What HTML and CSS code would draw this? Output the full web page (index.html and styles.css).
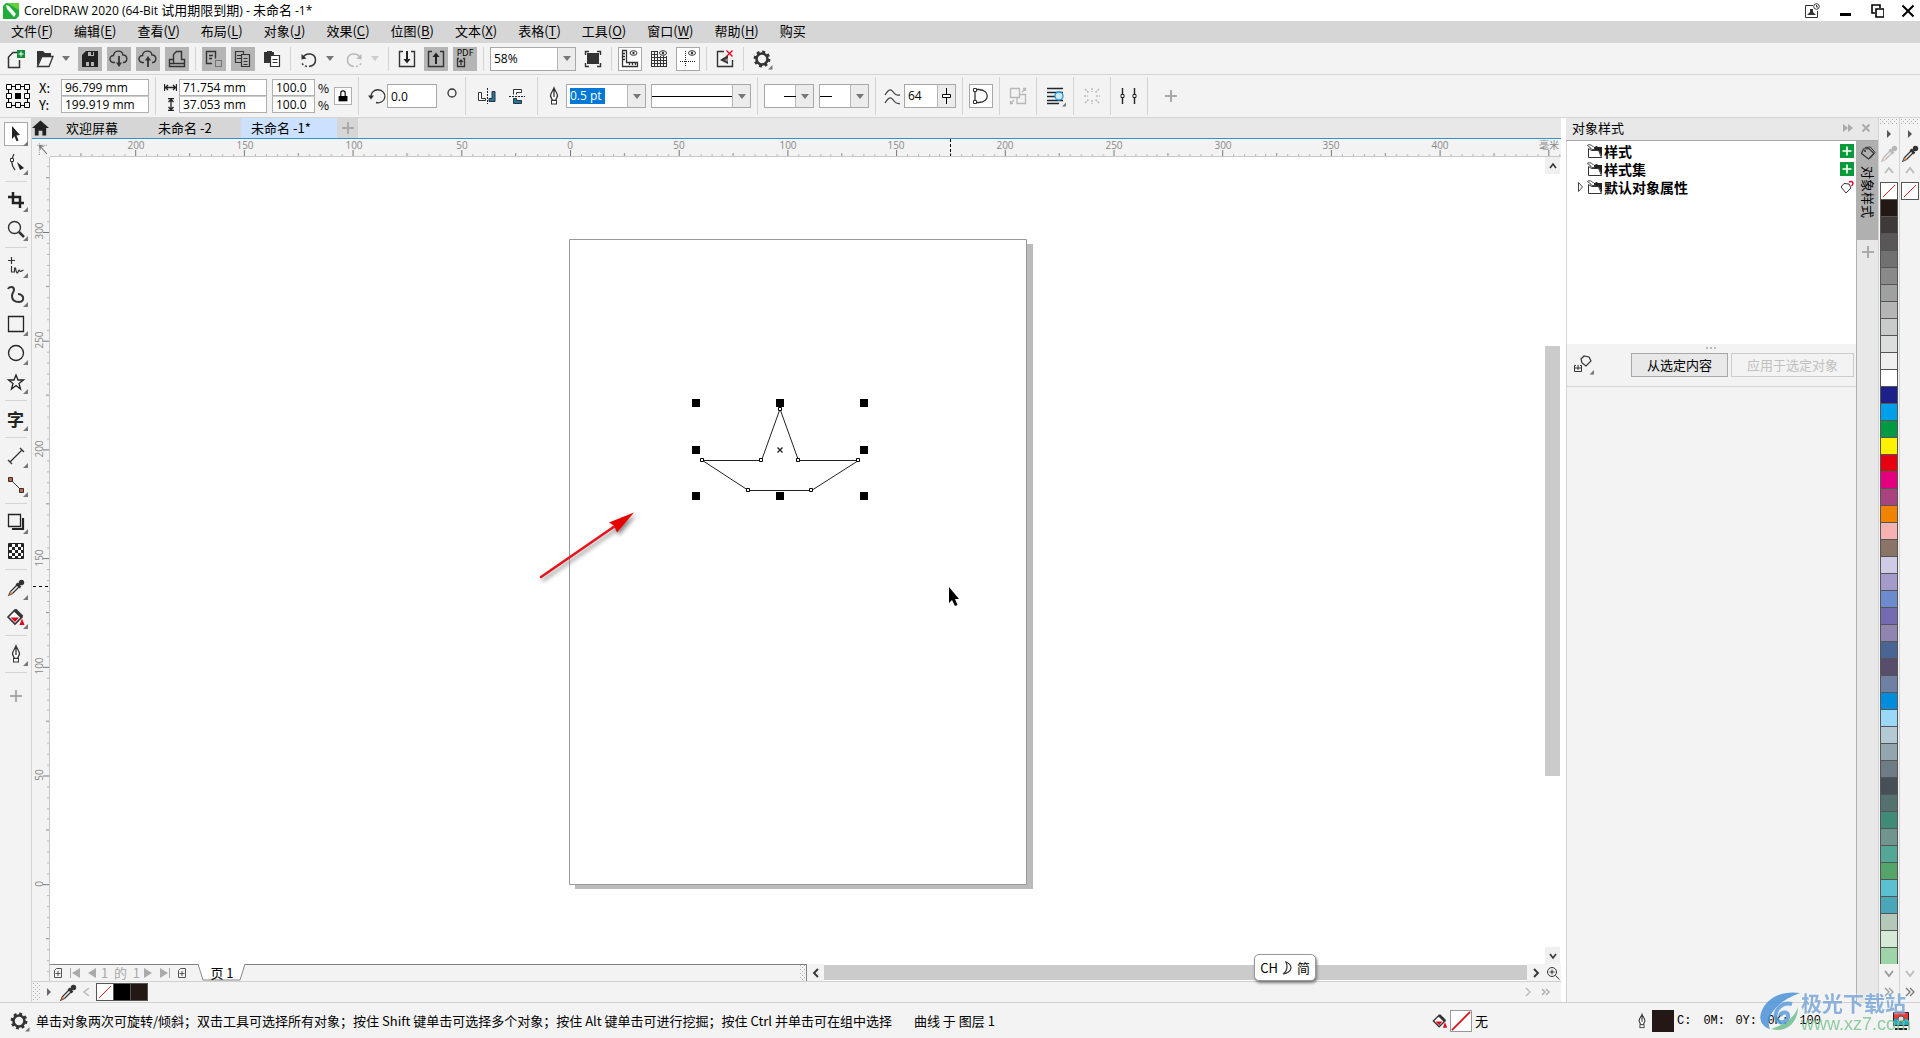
FILE: index.html
```html
<!DOCTYPE html>
<html lang="zh-CN">
<head>
<meta charset="utf-8">
<meta name="viewport" content="width=device-width, initial-scale=1">
<title>CorelDRAW 2020 - 未命名 -1</title>
<link rel="stylesheet" href="styles.css">
</head>
<body>
<svg class="defs" aria-hidden="true">
  <defs>
    <symbol id="caret" viewBox="0 0 8 5"><path d="M0 0h8L4 5z" fill="#777"/></symbol>
    <symbol id="gear" viewBox="0 0 24 24"><circle cx="12" cy="12" r="5.5" fill="none" stroke="#333" stroke-width="2.6"/><circle cx="12" cy="12" r="7.2" fill="none" stroke="#333" stroke-width="2.4" stroke-dasharray="2.9 2.755"/><path d="M22.5 18v4.500h-4.500z" fill="#777"/></symbol>
    <symbol id="dropper" viewBox="0 0 24 24"><path d="M5 19l1.500-3.500 7-7 2 2-7 7z" fill="#eee" stroke="#333" stroke-width="1.300"/><path d="M5 19l1.500-3.500 2.500 2z" fill="#e08040"/><path d="M12.500 7.500l4 4M14 9.500l4-4" stroke="#333" stroke-width="2.500"/><circle cx="17.500" cy="6.500" r="2.700" fill="#333"/></symbol>
    <symbol id="bucket" viewBox="0 0 24 24"><path d="M4 12l7-7 7 7-7 7z" fill="#fff" stroke="#333" stroke-width="1.600"/><path d="M11 5l7 7" stroke="#333" stroke-width="3.500"/><path d="M6.500 12.500h8.500L11 17z" fill="#e2001a"/><path d="M18 13.500l2.500 6.500h-5z" fill="#e2001a"/></symbol>
    <symbol id="pen" viewBox="0 0 24 24"><path d="M12 4c1 3 3.500 5 3.500 8l-2 4.500h-3L8.500 12c0-3 2.500-5 3.500-8zM12 5v8" fill="#fff" stroke="#333" stroke-width="1.300"/><rect x="9.500" y="16.500" width="5" height="3.500" fill="#fff" stroke="#333"/></symbol>
    <symbol id="folder" viewBox="0 0 18 16"><path d="M8 4l3-1 1 1h4v10l-3-6H8z" fill="#222"/><path d="M2.500 5.500v9h13l-3-7h-7l-3-2" fill="#fff" stroke="#333"/><path d="M7.500 4C5 1 1.500 1.500 1.500 2.500s2 .5 3 2.500 2 1.500 4 1.500" fill="#fff" stroke="#333"/></symbol>
    <symbol id="tag" viewBox="0 0 16 16"><path d="M1.500 8.500l2-4.500L9 3.500l5 5-5.500 5.500z" fill="none" stroke="#333" stroke-width="1.200"/><circle cx="5" cy="6" r="1" fill="#333"/></symbol>
    <symbol id="pageadd" viewBox="0 0 10 12"><path d="M3.500 1.500h5v9h-7v-7z" fill="none" stroke="#555"/><path d="M5 4v5M2.500 6.500h5" stroke="#555"/></symbol>
    <symbol id="plus" viewBox="0 0 12 12"><path d="M6 0v12M0 6h12" stroke="#aaa" stroke-width="2"/></symbol>
    <symbol id="plusgreen" viewBox="0 0 14 14"><path d="M0 0h14v14H0z" fill="#0a9a3c"/><path d="M7 2.500v9M2.500 7h9" stroke="#fff" stroke-width="1.600"/></symbol>
    <symbol id="corner" viewBox="0 0 24 24"><path d="M24 19v5h-5z" fill="#777"/></symbol>
    <pattern id="grip" width="4" height="4" patternUnits="userSpaceOnUse"><path d="M0 0h1v1H0zM2 2h1v1H2z" fill="#aaa"/></pattern>
    <pattern id="hticks" x="537" y="0" width="108.700" height="17" patternUnits="userSpaceOnUse">
      <path d="M.5 11v6" stroke="#777"/><path d="M54.500 14v3" stroke="#888"/>
      <path d="M11.500 15.500v1M22.500 15.500v1M33.500 15.500v1M43.500 15.500v1M65.500 15.500v1M76.500 15.500v1M87.500 15.500v1M98.500 15.500v1" stroke="#777"/>
    </pattern>
    <pattern id="vticks" x="0" y="75" width="17" height="108.700" patternUnits="userSpaceOnUse">
      <path d="M11 .5h6" stroke="#777"/><path d="M14 54.500h3" stroke="#888"/>
      <path d="M15.500 11.500h1M15.500 22.500h1M15.500 33.500h1M15.500 43.500h1M15.500 65.500h1M15.500 76.500h1M15.500 87.500h1M15.500 98.500h1" stroke="#777"/>
    </pattern>
  </defs>
</svg>

<div class="app">
  <header class="titlebar">
    <svg class="logo" viewBox="0 0 16 16"><path d="M3 0h13v13l-3 3H0V3z" fill="#1fae3a"/><path d="M4 0h12v7z" fill="#62cf3c"/><path d="M3 2l3 1 7 8-2 3-7-8z" fill="#fff"/></svg>
    <h1 class="title">CorelDRAW 2020 (64-Bit <span>试用期限到期</span>) - <span>未命名</span> -1*</h1>
    <div class="window-buttons">
      <button class="win" aria-label="账户"><svg viewBox="0 0 16 16"><path d="M9 2.500H1.500v12h12V8" fill="none" stroke="#333"/><path d="M3 12h9l-3-3V6H6v3z" fill="#333"/><circle cx="12.500" cy="3.500" r="2.800" fill="#fff" stroke="#333"/><path d="M12.500 2v2h1.500" stroke="#333" fill="none"/></svg></button>
      <button class="win" aria-label="最小化"><svg viewBox="0 0 16 16"><path d="M4 10h11v3H4z" fill="#000"/></svg></button>
      <button class="win" aria-label="还原"><svg viewBox="0 0 16 16"><path d="M7 10H4V2h8v3M8 6h8v8H8z" fill="none" stroke="#000" stroke-width="1.600"/></svg></button>
      <button class="win" aria-label="关闭"><svg viewBox="0 0 16 16"><path d="M2.500 2.500l11 11M13.500 2.500l-11 11" stroke="#000" stroke-width="2"/></svg></button>
    </div>
  </header>

  <nav class="menubar" aria-label="菜单">
    <button>文件(<u>F</u>)</button><button>编辑(<u>E</u>)</button><button>查看(<u>V</u>)</button><button>布局(<u>L</u>)</button><button>对象(<u>J</u>)</button><button>效果(<u>C</u>)</button><button>位图(<u>B</u>)</button><button>文本(<u>X</u>)</button><button>表格(<u>T</u>)</button><button>工具(<u>O</u>)</button><button>窗口(<u>W</u>)</button><button>帮助(<u>H</u>)</button><button>购买</button>
  </nav>

  <div class="bar standard">
    <button class="ib" aria-label="新建"><svg viewBox="0 0 24 24"><path d="M14 5.500H9L4.500 10v10.500h11V13" fill="none" stroke="#333" stroke-width="1.500"/><path d="M13 3h8v8h-8z" fill="#128a3a"/><path d="M17 4.500v5M14.500 7h5" stroke="#fff"/></svg></button>
    <button class="ib" aria-label="打开"><svg viewBox="0 0 24 24"><path d="M4 19V4h6l2 2h6v3H9z" fill="#333"/><path d="M4.500 19.500L9 9.500h11l-4 10z" fill="#f3f3f3" stroke="#333" stroke-width="1.300"/></svg></button>
    <button class="drop" aria-label="打开选项"><svg><use href="#caret"/></svg></button>
    <button class="ib on" aria-label="保存"><svg viewBox="0 0 24 24"><path d="M4 8l4-4h12v16H4z" fill="#222"/><path d="M10 5h6v4h-6zM8 15h8v4H8z" fill="#b5b5b5"/><path d="M13 5h2v3h-2z" fill="#222"/><path d="M11 15h2v4h-2z" fill="#222"/></svg></button>
    <button class="ib on" aria-label="从云下载"><svg viewBox="0 0 24 24"><path d="M8 15.500H6.500a3.500 3.500 0 0 1 0-7C7 3 15 2.500 16 8c5-.5 5 7.500.5 7.500H16" fill="none" stroke="#333" stroke-width="1.400"/><path d="M12 9v8" stroke="#333" stroke-width="1.800"/><path d="M9 15.500h6L12 20z" fill="#333"/></svg></button>
    <button class="ib on" aria-label="上传到云"><svg viewBox="0 0 24 24"><path d="M8 15.500H6.500a3.500 3.500 0 0 1 0-7C7 3 15 2.500 16 8c5-.5 5 7.500.5 7.500H16" fill="none" stroke="#333" stroke-width="1.400"/><path d="M12 12v8" stroke="#333" stroke-width="1.800"/><path d="M9 13.500h6L12 9z" fill="#333"/></svg></button>
    <button class="ib on" aria-label="打印"><svg viewBox="0 0 24 24"><path d="M8.500 12.500h-4v7h15v-7h-3v-8h-5l-3 3zM4.500 16.500h4v-4M8.500 16.500h11" fill="none" stroke="#333" stroke-width="1.400"/></svg></button>
    <span class="sep"></span>
    <button class="ib on" aria-label="剪切"><svg viewBox="0 0 24 24"><path d="M10 16.500H4.500v-12h9v7M7 8.500h4M7 11.500h3" fill="none" stroke="#333" stroke-width="1.400"/><path d="M13.500 13.500h6v6h-6z" fill="none" stroke="#333" stroke-dasharray="1 1"/></svg></button>
    <button class="ib on" aria-label="复制"><svg viewBox="0 0 24 24"><path d="M10 15.500H4.500v-11h8v3M6 8.500h4M6 11.500h4M10.500 7.500h8v12h-8zM12.500 11.500h4M12.500 14.500h4M12.500 17.500h4" fill="none" stroke="#333" stroke-width="1.200"/></svg></button>
    <button class="ib" aria-label="粘贴"><svg viewBox="0 0 24 24"><path d="M4 5h3V4h5v1h2v11H4z" fill="#333"/><path d="M10.500 8.500h9v11h-9zM12.500 12.500h5M12.500 15.500h5" fill="#fff" stroke="#333" stroke-width="1.200"/></svg></button>
    <span class="sep"></span>
    <button class="ib" aria-label="撤消"><svg viewBox="0 0 24 24"><path d="M6 10.500C9 5 18.500 6 18.500 13c0 4-3 6-6.500 6.500" fill="none" stroke="#333" stroke-width="1.500"/><path d="M10 19.500c-3-.5-5-2-5.500-5" fill="none" stroke="#333" stroke-width="1.500" stroke-dasharray="2 2"/><path d="M4.500 7v5.500l5-1z" fill="#333"/></svg></button>
    <button class="drop" aria-label="撤消列表"><svg><use href="#caret"/></svg></button>
    <button class="ib dim" aria-label="重做" disabled><svg viewBox="0 0 24 24"><path d="M18 10.500C15 5 5.500 6 5.500 13c0 4 3 6 6.500 6.500" fill="none" stroke="#333" stroke-width="1.500"/><path d="M14 19.500c3-.5 5-2 5.500-5" fill="none" stroke="#333" stroke-width="1.500" stroke-dasharray="2 2"/><path d="M19.500 7v5.500l-5-1z" fill="#333"/></svg></button>
    <button class="drop dim" aria-label="重做列表" disabled><svg><use href="#caret"/></svg></button>
    <span class="sep"></span>
    <button class="ib" aria-label="导入"><svg viewBox="0 0 24 24"><path d="M8 4.500H4.500v15h15v-15H16" fill="none" stroke="#333" stroke-width="1.400"/><path d="M12 4v9" stroke="#222" stroke-width="2"/><path d="M8.500 12h7L12 16.500z" fill="#222"/></svg></button>
    <button class="ib on" aria-label="导出"><svg viewBox="0 0 24 24"><path d="M8 4.500H4.500v15h15v-15H16" fill="none" stroke="#333" stroke-width="1.400"/><path d="M12 8v9" stroke="#222" stroke-width="2"/><path d="M8.500 10h7L12 5.500z" fill="#222"/></svg></button>
    <button class="ib on pdf" aria-label="发布为 PDF"><span>PDF</span><svg viewBox="0 0 24 12"><path d="M6 1.500H4.500v8h7v-8H10M8 8V3M6 5l2-2 2 2" fill="none" stroke="#333" stroke-width="1.300"/></svg></button>
    <span class="sep"></span>
    <div class="combo zoom"><select aria-label="缩放级别"><option>58%</option></select><span class="arrow"><svg><use href="#caret"/></svg></span></div>
    <button class="ib" aria-label="全屏预览"><svg viewBox="0 0 24 24"><path d="M6 6h12v11H6z" fill="#333"/><path d="M4.500 8V4.500H8M16 4.500h3.500V8M19.500 16v3.500H16M8 19.500H4.500V16" fill="none" stroke="#333" stroke-width="1.400"/></svg></button>
    <span class="sep"></span>
    <button class="ib box" aria-label="显示标尺"><svg viewBox="0 0 24 24"><path d="M4.500 3.500h4v12h11v4h-15zM5 6.500h2M5 9.500h2M5 12.500h2M11.500 16v2M14.500 16v2M17.500 16v2" fill="none" stroke="#333" stroke-width="1.300"/><ellipse cx="15.500" cy="6" rx="3.500" ry="2.300" fill="none" stroke="#333"/><circle cx="15.500" cy="6" r="1.200" fill="#333"/></svg></button>
    <button class="ib" aria-label="显示网格"><svg viewBox="0 0 24 24"><path d="M4.500 4v15M7.500 4v15M10.500 4v15M13.500 9v10M16.500 9v10M19.500 9v10M4 4.500h7M4 7.500h7M4 10.500h16M4 13.500h16M4 16.500h16M4 19.500h16" stroke="#333"/><ellipse cx="16" cy="6" rx="3.500" ry="2.300" fill="none" stroke="#333"/><circle cx="16" cy="6" r="1.200" fill="#333"/></svg></button>
    <button class="ib box" aria-label="显示辅助线"><svg viewBox="0 0 24 24"><path d="M4 14.500h16" stroke="#222" stroke-dasharray="1 1"/><path d="M9.500 4v16" stroke="#222" stroke-dasharray="1 1"/><ellipse cx="16" cy="6" rx="3.500" ry="2.300" fill="none" stroke="#333"/><circle cx="16" cy="6" r="1.200" fill="#333"/></svg></button>
    <span class="sep"></span>
    <button class="ib" aria-label="贴齐关闭"><svg viewBox="0 0 24 24"><path d="M11 4.500H4.500v15h15V13" fill="none" stroke="#333" stroke-width="1.400"/><path d="M15 8v9l-8-4z" fill="#333"/><path d="M11 13l4-2v4z" fill="#888"/><path d="M13.500 3.500l6 6M19.500 3.500l-6 6" stroke="#e2001a" stroke-width="1.300"/></svg></button>
    <span class="sep"></span>
    <button class="ib" aria-label="选项"><svg><use href="#gear"/></svg></button>
  </div>

  <div class="bar property">
    <button class="ib" aria-label="对象原点"><svg viewBox="0 0 24 24"><path d="M2.500 2.500h19v19h-19z" fill="none" stroke="#000"/><g fill="#fff" stroke="#000"><path d="M.5.5h5v5h-5zM9.500.5h5v5h-5zM18.500.5h5v5h-5zM.5 9.500h5v5h-5zM18.500 9.500h5v5h-5zM.5 18.500h5v5h-5zM9.500 18.500h5v5h-5zM18.500 18.500h5v5h-5z"/></g><path d="M9 9h6v6H9z"/></svg></button>
    <div class="pair pos">
      <label for="px">X:</label><input id="px" value="96.799 mm">
      <label for="py">Y:</label><input id="py" value="199.919 mm">
    </div>
    <span class="sep"></span>
    <div class="pair size">
      <label for="sw" aria-label="宽度"><svg viewBox="0 0 13 13"><path d="M.5 3v7M12.500 3v7M1 6.500h11M4 4L1.500 6.500 4 9M9 4l2.500 2.500L9 9" fill="none" stroke="#222" stroke-width="1.300"/></svg></label><input id="sw" value="71.754 mm">
      <label for="sh" aria-label="高度"><svg viewBox="0 0 13 13"><path d="M4 .5h6M4 12.500h6M7 1v11M4.500 4L7 1.500 9.500 4M4.500 9L7 11.500 9.500 9" fill="none" stroke="#222" stroke-width="1.300"/></svg></label><input id="sh" value="37.053 mm">
    </div>
    <div class="pair pct">
      <input id="sx" value="100.0"><label for="sx">%</label>
      <input id="sy" value="100.0"><label for="sy">%</label>
    </div>
    <button class="lock" aria-label="锁定比率"><svg viewBox="0 0 18 18"><path d="M6.500 9V5.500c0-3 5-3 5 0V9" fill="none" stroke="#000" stroke-width="1.300"/><path d="M4 9h10v6H4z"/></svg></button>
    <span class="sep"></span>
    <div class="field"><label for="rot" aria-label="旋转角度"><svg viewBox="0 0 22 24"><path d="M6 13a7 6.500 0 1 1 5 5.500" fill="none" stroke="#333" stroke-width="1.300"/><path d="M3 11.500h6l-3 4z" fill="#333"/></svg></label><input id="rot" class="num" value="0.0"></div>
    <span class="degree"><svg viewBox="0 0 17 24"><circle cx="10" cy="9" r="4" fill="none" stroke="#333" stroke-width="1.300"/></svg></span>
    <span class="sep"></span>
    <button class="ib mirror" aria-label="水平镜像"><svg viewBox="0 0 24 24"><path d="M4.500 8.500h3v6h4v2h-7z" fill="#fff" stroke="#333"/><path d="M21 7.500h-3v7h-3v3h6z" fill="#1d79a8" stroke="#333"/><path d="M13.500 4v16" stroke="#222" stroke-dasharray="2 1"/></svg></button>
    <button class="ib mirror" aria-label="垂直镜像"><svg viewBox="0 0 24 24"><path d="M7.500 10.500v-5h8v3h-5v2" fill="#fff" stroke="#333"/><path d="M7.500 14.500v5h8v-3h-5v-2z" fill="#1d79a8" stroke="#333"/><path d="M3 12.500h16" stroke="#222" stroke-dasharray="2 1"/></svg></button>
    <span class="sep"></span>
    <label class="penlabel" for="ow" aria-label="轮廓宽度"><svg viewBox="2 0 17 24"><use href="#pen" width="24" height="24"/></svg></label>
    <div class="combo outline"><input id="ow" class="picked" value="0.5 pt"><button class="arrow" aria-label="宽度列表"><svg><use href="#caret"/></svg></button></div>
    <div class="combo linestyle"><select aria-label="线条样式"><option></option></select><span class="stroke full"></span><span class="arrow"><svg><use href="#caret"/></svg></span></div>
    <span class="sep"></span>
    <div class="combo ends"><select aria-label="起始箭头"><option></option></select><span class="stroke right"></span><span class="arrow"><svg><use href="#caret"/></svg></span></div>
    <div class="combo ends"><select aria-label="终止箭头"><option></option></select><span class="stroke left"></span><span class="arrow"><svg><use href="#caret"/></svg></span></div>
    <span class="sep"></span>
    <div class="field"><label for="sm" aria-label="手绘平滑"><svg viewBox="0 0 22 24"><path d="M3 11c5-8 7-5 9-2s3 2 6 2M3 19c5-8 7-5 9-2s3 2 6 3" fill="none" stroke="#444" stroke-width="1.300"/></svg></label>
    <div class="combo smooth"><input id="sm" value="64"><button class="arrow" aria-label="平滑滑块"><svg class="slider" viewBox="0 0 11 16"><path d="M5.500 0v16" stroke="#000"/><path d="M1.500 6.500h8v3h-8z" fill="#fff" stroke="#000"/></svg></button></div></div>
    <span class="sep"></span>
    <button class="ib box" aria-label="装订框"><svg viewBox="0 0 24 24"><path d="M6 5.500h4c11 1 11 12 0 13H6zM6 5v13" fill="none" stroke="#333" stroke-width="1.300"/><path d="M4.500 4.500h3v3h-3zM4.500 16.500h3v3h-3z" fill="#fff" stroke="#333"/></svg></button>
    <span class="sep"></span>
    <button class="ib dim" aria-label="缩放" disabled><svg viewBox="0 0 24 24"><path d="M4.500 4.500h9v9h-9zM11 13.500v6h8.500v-9H14M16 8l4-4M17 4.500h2.500V7M8 16l-4 4M4.500 17v2.500H7" fill="none" stroke="#333" stroke-width="1.300"/></svg></button>
    <span class="sep"></span>
    <button class="ib" aria-label="文本换行"><svg viewBox="0 0 24 24"><path d="M4 4.500h16M4 8.500h16M4 12.500h8M4 16.500h16M4 19.500h12" stroke="#1c2530" stroke-width="1.500"/><circle cx="16" cy="12" r="4" fill="#cdeafa" stroke="#2196d6" stroke-width="1.300"/><path d="M23 18.500v4h-4z" fill="#777"/></svg></button>
    <span class="sep"></span>
    <button class="ib dim" aria-label="对齐" disabled><svg viewBox="0 0 24 24"><path d="M5 5l4 4M19 5l-4 4M5 19l4-4M19 19l-4-4M12 4v4M12 16v4M4 12h4M16 12h4" stroke="#333" stroke-width="1.500" stroke-dasharray="2 1"/></svg></button>
    <span class="sep"></span>
    <button class="ib" aria-label="节点"><svg viewBox="0 0 24 24"><path d="M5.500 4v16M17.500 4v16" stroke="#222" stroke-width="1.400"/><path d="M4 10.500h3v3H4zM16 10.500h3v3h-3z" fill="#fff" stroke="#222"/></svg></button>
    <span class="sep"></span>
    <button class="more" aria-label="自定义"><svg><use href="#plus"/></svg></button>
  </div>

  <main class="work">
    <aside class="toolbox">
      <button class="ib box" aria-label="选择"><svg viewBox="0 0 24 24"><path d="M8 4l8 9-3.500.5 2 5-2 .8-2-5L8 17z" fill="#222"/><use href="#corner"/></svg></button>
      <button class="ib" aria-label="形状"><svg viewBox="0 0 24 24"><path d="M10 3C7 8 7 14 11 19" fill="none" stroke="#333" stroke-width="1.300"/><path d="M6.500 7.500h3v3h-3z" fill="#fff" stroke="#333"/><path d="M13 11l7 6-4 2z" fill="#222"/><use href="#corner"/></svg></button>
      <span class="sep"></span>
      <button class="ib" aria-label="裁剪"><svg viewBox="0 0 24 24"><path d="M4 9h12v11M9 4v11h11" fill="none" stroke="#222" stroke-width="2.500"/><use href="#corner"/></svg></button>
      <button class="ib" aria-label="缩放"><svg viewBox="0 0 24 24"><circle cx="10.500" cy="10.500" r="6" fill="none" stroke="#333" stroke-width="1.400"/><path d="M15 15l5 5" stroke="#333" stroke-width="2.500"/><use href="#corner"/></svg></button>
      <span class="sep"></span>
      <button class="ib" aria-label="手绘"><svg viewBox="0 0 24 24"><path d="M7.500 3v7M4 6.500h7M7.500 12v6h3v-4h1c1 6 2 6 3 3s1 2 3 0l2-1" fill="none" stroke="#333" stroke-width="1.200"/><use href="#corner"/></svg></button>
      <button class="ib" aria-label="艺术笔"><svg viewBox="0 0 24 24"><path d="M4 6c1-2.500 6-3 6 1 0 2-2 3-2 6 0 4 3 6 7 6 3 0 5-2 4-5-1-2-3-3-5-3" fill="none" stroke="#333" stroke-width="2"/><use href="#corner"/></svg></button>
      <button class="ib" aria-label="矩形"><svg viewBox="0 0 24 24"><path d="M4.500 4.500h15v15h-15z" fill="none" stroke="#222" stroke-width="1.300"/><use href="#corner"/></svg></button>
      <button class="ib" aria-label="椭圆形"><svg viewBox="0 0 24 24"><circle cx="12" cy="12" r="7.500" fill="none" stroke="#222" stroke-width="1.300"/><use href="#corner"/></svg></button>
      <button class="ib" aria-label="星形"><svg viewBox="0 0 24 24"><path d="M12 5l2 5h5.500l-4.500 3.500 1.500 5.500-4.500-3.500L7.500 19 9 13.500 4.500 10H10z" fill="none" stroke="#222" stroke-width="1.300"/><use href="#corner"/></svg></button>
      <span class="sep"></span>
      <button class="ib glyph" aria-label="文本"><span>字</span><svg viewBox="0 0 24 24"><use href="#corner"/></svg></button>
      <span class="sep"></span>
      <button class="ib" aria-label="平行度量"><svg viewBox="0 0 24 24"><path d="M6 18L18 6M4 16l4 4M16 4l4 4" stroke="#333" stroke-width="1.300"/><use href="#corner"/></svg></button>
      <button class="ib" aria-label="连接器"><svg viewBox="0 0 24 24"><path d="M6 6l11 11" stroke="#333"/><path d="M4.500 4.500h4v4h-4zM15.500 15.500h4v4h-4z" fill="#c8603c" stroke="#333"/><use href="#corner"/></svg></button>
      <span class="sep"></span>
      <button class="ib" aria-label="阴影"><svg viewBox="0 0 24 24"><path d="M4.500 4.500h12v12h-12z" fill="none" stroke="#222" stroke-width="1.300"/><path d="M19 8v11H8" fill="none" stroke="#222" stroke-width="2.200"/><use href="#corner"/></svg></button>
      <button class="ib" aria-label="透明度"><svg viewBox="0 0 24 24"><path d="M4.500 4.500h15v15h-15z" fill="#fff" stroke="#222"/><path d="M5 6.500h14M5 12.500h14M5 18.500h14" stroke="#222" stroke-width="3" stroke-dasharray="3 3"/><path d="M8 9.500h11M8 15.500h11" stroke="#222" stroke-width="3" stroke-dasharray="3 3"/></svg></button>
      <span class="sep"></span>
      <button class="ib" aria-label="颜色滴管"><svg viewBox="0 0 24 24"><use href="#dropper"/><use href="#corner"/></svg></button>
      <button class="ib" aria-label="交互式填充"><svg viewBox="0 0 24 24"><use href="#bucket"/><use href="#corner"/></svg></button>
      <span class="sep"></span>
      <button class="ib" aria-label="轮廓"><svg viewBox="0 0 24 24"><use href="#pen"/><use href="#corner"/></svg></button>
      <span class="sep"></span>
      <button class="more" aria-label="自定义"><svg><use href="#plus"/></svg></button>
    </aside>

    <section class="document">
      <div class="tabs">
        <button class="home" aria-label="主页"><svg viewBox="0 0 18 16"><path d="M9 0l9 8h-3v8h-4v-5H7v5H3V8H0z" fill="#222"/></svg></button>
        <button class="tab">欢迎屏幕</button><button class="tab">未命名 -2</button><button class="tab active">未命名 -1*</button>
        <button class="tabadd" aria-label="新建标签"><svg><use href="#plus"/></svg></button>
      </div>
      <div class="stage">
        <svg class="origin" viewBox="0 0 17 17"><path d="M5 6h10M7 4v11" stroke="#999" stroke-dasharray="1 1"/><path d="M7 6l7 8M7 6l4 1M7 6l1 4" stroke="#777" fill="none"/></svg>
        <svg class="hruler">
          <g transform="translate(-17 0)">
            <rect x="17" width="100%" height="17" fill="url(#hticks)"/>
            <g class="rlabel"><text x="103" y="10">200</text><text x="212" y="10">150</text><text x="321" y="10">100</text><text x="429" y="10">50</text><text x="537" y="10">0</text><text x="646" y="10">50</text><text x="755" y="10">100</text><text x="863" y="10">150</text><text x="972" y="10">200</text><text x="1081" y="10">250</text><text x="1190" y="10">300</text><text x="1298" y="10">350</text><text x="1407" y="10">400</text><text x="1516" y="10">毫米</text></g>
            <path d="M917.500 0v17" stroke="#000" stroke-dasharray="3 2"/>
          </g>
        </svg>
        <svg class="vruler">
          <rect width="17" height="100%" fill="url(#vticks)"/>
          <g class="rlabel"><text transform="translate(11 74) rotate(-90)">300</text><text transform="translate(11 183) rotate(-90)">250</text><text transform="translate(11 292) rotate(-90)">200</text><text transform="translate(11 401) rotate(-90)">150</text><text transform="translate(11 509) rotate(-90)">100</text><text transform="translate(11 618) rotate(-90)">50</text><text transform="translate(11 727) rotate(-90)">0</text></g>
          <path d="M1 429.500h16" stroke="#000" stroke-dasharray="3 3"/>
        </svg>
        <svg class="canvas">
          <g transform="translate(-50 -157)">
            <path d="M575 244h458v645H575z" fill="#bbb"/>
            <path d="M569.500 239.500h457v645h-457z" fill="#fff" stroke="#999"/>
            <path d="M702.500 460.500h59L780 409l18.500 51.500h60l-47 30h-63z" fill="none" stroke="#222"/>
            <g fill="#fff" stroke="#000"><path d="M700.500 458.500h3v3h-3zM759.500 458.500h3v3h-3zM778.500 407.500h3v3h-3zM796.500 458.500h3v3h-3zM856.500 458.500h3v3h-3zM809.500 488.500h3v3h-3zM746.500 488.500h3v3h-3z"/></g>
            <path d="M692 399h8v8h-8zM776 399h8v8h-8zM860 399h8v8h-8zM692 446h8v8h-8zM860 446h8v8h-8zM692 492h8v8h-8zM776 492h8v8h-8zM860 492h8v8h-8z"/>
            <path d="M777.500 447.500l5 5M782.500 447.500l-5 5" stroke="#222" stroke-width="1.300"/>
            <g class="pointer"><path d="M541 577l74-51" stroke="#e8141c" stroke-width="2.500" stroke-linecap="round"/><path d="M634 512.500l-25 10 5 3 3 7z" fill="#e60000"/></g>
            <path d="M949 587v16l3-3 3 6 2.500-1-2.500-6h4z"/>
          </g>
        </svg>
        <div class="vscroll"><button aria-label="向上"><svg viewBox="0 0 10 10"><path d="M2 7l3-4 3 4" fill="none" stroke="#333" stroke-width="1.600"/></svg></button><div class="track"><div class="thumb"></div></div><button aria-label="向下"><svg viewBox="0 0 10 10"><path d="M2 3l3 4 3-4" fill="none" stroke="#333" stroke-width="1.600"/></svg></button></div>
        <div class="pagebar">
          <div class="pagenav">
            <button aria-label="添加页"><svg viewBox="0 0 16 12"><use href="#pageadd" x="3" width="10" height="12"/></svg></button>
            <button aria-label="首页"><svg viewBox="0 0 16 12"><path d="M3 1h1v10H3zM13 1v10L5 6z" fill="#aaa"/></svg></button>
            <button aria-label="上一页"><svg viewBox="0 0 16 12"><path d="M12 1v10L4 6z" fill="#aaa"/></svg></button>
            <span class="count">1&nbsp; 的 &nbsp;1</span>
            <button aria-label="下一页"><svg viewBox="0 0 16 12"><path d="M4 1v10l8-5z" fill="#aaa"/></svg></button>
            <button aria-label="末页"><svg viewBox="0 0 16 12"><path d="M12 1h1v10h-1zM3 1v10l8-5z" fill="#aaa"/></svg></button>
            <button aria-label="添加页"><svg viewBox="0 0 16 12"><use href="#pageadd" x="3" width="10" height="12"/></svg></button>
            <button class="page-tab"><svg viewBox="0 0 48 17"><path d="M0 0l5 16h37l5-16" fill="#fff" stroke="#888"/></svg><span>页 1</span></button>
          </div>
          <svg class="vgrip"><rect width="100%" height="100%" fill="url(#grip)"/></svg>
          <div class="hscroll"><button aria-label="向左"><svg viewBox="0 0 10 10"><path d="M7 1L3 5l4 4" fill="none" stroke="#333" stroke-width="1.800"/></svg></button><div class="thumb"></div><button aria-label="向右"><svg viewBox="0 0 10 10"><path d="M3 1l4 4-4 4" fill="none" stroke="#333" stroke-width="1.800"/></svg></button><button aria-label="导航器"><svg class="big" viewBox="0 0 14 14"><circle cx="6" cy="6" r="4.500" fill="none" stroke="#333"/><path d="M3.500 6h5M6 3.500v5M9.500 9.500l4 4" stroke="#333"/></svg></button></div>
        </div>
      </div>
      <div class="docpalette">
        <svg class="vgrip"><rect width="100%" height="100%" fill="url(#grip)"/></svg>
        <button class="tiny" aria-label="选项"><svg viewBox="0 0 16 16"><path d="M6 4v8l4-4z" fill="#666"/></svg></button>
        <button class="eye" aria-label="滴管"><svg viewBox="3 2 18 18"><use href="#dropper" width="24" height="24"/></svg></button>
        <button class="tiny" aria-label="向左滚动"><svg viewBox="0 0 16 16"><path d="M10 4L5 8l5 4" fill="none" stroke="#bbb" stroke-width="1.600"/></svg></button>
        <div class="row"><button class="sw none" aria-label="无"><svg viewBox="0 0 16 16"><path d="M2 14L14 2" stroke="#d22"/></svg></button><button class="sw" aria-label="黑" style="background:#000"></button><button class="sw" aria-label="深黑" style="background:#231815"></button></div>
        <span class="grow"></span>
        <button class="tiny" aria-label="向右滚动"><svg viewBox="0 0 16 16"><path d="M6 4l4 4-4 4" fill="none" stroke="#bbb" stroke-width="1.400"/></svg></button>
        <button class="tiny" aria-label="展开"><svg viewBox="0 0 16 16"><path d="M4 5l3 3-3 3M8 5l3 3-3 3" fill="none" stroke="#aaa" stroke-width="1.300"/></svg></button>
      </div>
    </section>

    <aside class="docker">
      <header><h2>对象样式</h2><button class="tiny" aria-label="折叠"><svg viewBox="0 0 16 16"><path d="M3 4v8l5-4zM8 4v8l5-4z" fill="#aaa"/></svg></button><button class="tiny" aria-label="关闭"><svg viewBox="0 0 16 16"><path d="M4.500 4.500l7 7M11.500 4.500l-7 7" stroke="#aaa" stroke-width="1.800"/></svg></button></header>
      <div class="docker-body">
        <div class="panel">
          <ul class="tree">
            <li><span class="twist"></span><svg class="folder"><use href="#folder"/></svg><b>样式</b><button aria-label="新建样式"><svg><use href="#plusgreen"/></svg></button></li>
            <li><span class="twist"></span><svg class="folder"><use href="#folder"/></svg><b>样式集</b><button aria-label="新建样式集"><svg><use href="#plusgreen"/></svg></button></li>
            <li><span class="twist"><svg viewBox="0 0 7 12"><path d="M1.500 1.500v9l4-4.500z" fill="#fff" stroke="#444"/></svg></span><svg class="folder"><use href="#folder"/></svg><b>默认对象属性</b><button aria-label="还原默认"><svg viewBox="0 0 14 14"><path d="M1 7l3-3.500 5 .5 2 4-5 5z" fill="none" stroke="#333"/><path d="M9 2c4-2 5 2 2.500 4" fill="none" stroke="#e2001a" stroke-width="1.400"/></svg></button></li>
          </ul>
          <svg class="handle" viewBox="0 0 11 3"><path d="M0 0h2v2H0zM4 0h2v2H4zM8 0h2v2H8z" fill="#bbb"/></svg>
          <div class="actions">
            <button class="ib" aria-label="样式选项"><svg viewBox="0 0 24 24"><path d="M10 6l3-3 5 1 2 4-5 5-4-3z" fill="none" stroke="#333" stroke-width="1.200"/><path d="M5 12.500h-1.500v6h7v-6H9M7 17v-5M3 15h7" fill="none" stroke="#333"/><path d="M23 17v4.500h-4.500z" fill="#777"/></svg></button>
            <button class="push">从选定内容</button>
            <button class="push apply" disabled>应用于选定对象</button>
          </div>
        </div>
        <div class="side-tabs">
          <button class="side-tab"><svg viewBox="0 0 16 16"><use href="#tag"/><path d="M5 2.500l5.500-.5 4.500 5.500-5 6" fill="none" stroke="#333"/></svg><span>对象样式</span></button>
          <button class="more" aria-label="添加泊坞窗"><svg><use href="#plus"/></svg></button>
        </div>
      </div>
    </aside>

    <aside class="palette">
      <svg class="hgrip"><rect width="100%" height="100%" fill="url(#grip)"/></svg>
      <button class="tiny" aria-label="选项"><svg viewBox="0 0 16 16"><path d="M6 4v8l4-4z" fill="#555"/></svg></button>
      <button class="eye dim" aria-label="滴管"><svg viewBox="3 2 18 18"><use href="#dropper" width="24" height="24"/></svg></button>
      <button class="tiny" aria-label="向上"><svg viewBox="0 0 16 16"><path d="M4 10l4-5 4 5" fill="none" stroke="#bbb" stroke-width="1.800"/></svg></button>
      <div class="swatches">
        <button class="sw none" aria-label="无"><svg viewBox="0 0 16 16"><path d="M2 14L14 2" stroke="#d22"/></svg></button>
        <i class="sw" style="background:#231815"></i><i class="sw" style="background:#3e3a39"></i><i class="sw" style="background:#595757"></i><i class="sw" style="background:#727171"></i><i class="sw" style="background:#898989"></i><i class="sw" style="background:#9fa0a0"></i><i class="sw" style="background:#b5b5b6"></i><i class="sw" style="background:#c9caca"></i><i class="sw" style="background:#dcdddd"></i><i class="sw" style="background:#efefef"></i><i class="sw" style="background:#ffffff"></i><i class="sw" style="background:#1d2088"></i><i class="sw" style="background:#00a0e9"></i><i class="sw" style="background:#009944"></i><i class="sw" style="background:#fff100"></i><i class="sw" style="background:#e60012"></i><i class="sw" style="background:#e4007f"></i><i class="sw" style="background:#a9437f"></i><i class="sw" style="background:#f08300"></i><i class="sw" style="background:#f5b2b2"></i><i class="sw" style="background:#8a7467"></i><i class="sw" style="background:#cfcbe7"></i><i class="sw" style="background:#a49bcb"></i><i class="sw" style="background:#6b8bcc"></i><i class="sw" style="background:#756bb0"></i><i class="sw" style="background:#9084b0"></i><i class="sw" style="background:#4a6594"></i><i class="sw" style="background:#584e6b"></i><i class="sw" style="background:#7080a4"></i><i class="sw" style="background:#008ddb"></i><i class="sw" style="background:#9bd7f7"></i><i class="sw" style="background:#b4c9d3"></i><i class="sw" style="background:#93a5ae"></i><i class="sw" style="background:#6e7c86"></i><i class="sw" style="background:#475058"></i><i class="sw" style="background:#54716f"></i><i class="sw" style="background:#3f8b78"></i><i class="sw" style="background:#70958f"></i><i class="sw" style="background:#52a796"></i><i class="sw" style="background:#55a469"></i><i class="sw" style="background:#5bc1cf"></i><i class="sw" style="background:#4ba7b8"></i><i class="sw" style="background:#b3c8b8"></i><i class="sw" style="background:#d5ead6"></i><i class="sw" style="background:#9dd5a8"></i>
      </div>
      <button class="tiny" aria-label="向下"><svg viewBox="0 0 16 16"><path d="M4 6l4 5 4-5" fill="none" stroke="#999" stroke-width="1.800"/></svg></button>
      <button class="tiny" aria-label="展开"><svg viewBox="0 0 16 16"><path d="M4 4l4 4-4 4M8 4l4 4-4 4" fill="none" stroke="#999" stroke-width="1.300"/></svg></button>
    </aside>
    <aside class="palette">
      <svg class="hgrip"><rect width="100%" height="100%" fill="url(#grip)"/></svg>
      <button class="tiny" aria-label="选项"><svg viewBox="0 0 16 16"><path d="M6 4v8l4-4z" fill="#555"/></svg></button>
      <button class="eye" aria-label="滴管"><svg viewBox="3 2 18 18"><use href="#dropper" width="24" height="24"/></svg></button>
      <button class="tiny" aria-label="向上"><svg viewBox="0 0 16 16"><path d="M4 10l4-5 4 5" fill="none" stroke="#bbb" stroke-width="1.800"/></svg></button>
      <div class="swatches"><button class="sw none last" aria-label="无"><svg viewBox="0 0 16 16"><path d="M2 14L14 2" stroke="#d22"/></svg></button></div>
      <button class="tiny" aria-label="向下"><svg viewBox="0 0 16 16"><path d="M4 6l4 5 4-5" fill="none" stroke="#bbb" stroke-width="1.800"/></svg></button>
      <button class="tiny" aria-label="展开"><svg viewBox="0 0 16 16"><path d="M4 4l4 4-4 4M8 4l4 4-4 4" fill="none" stroke="#777" stroke-width="1.300"/></svg></button>
    </aside>
  </main>

  <footer class="status">
    <button class="ib" aria-label="状态栏选项"><svg><use href="#gear"/></svg></button>
    <span class="hint">单击对象两次可旋转/倾斜；双击工具可选择所有对象；按住 Shift 键单击可选择多个对象；按住 Alt 键单击可进行挖掘；按住 Ctrl 并单击可在组中选择</span>
    <span class="object">曲线 于 图层 1</span>
    <div class="fill"><svg class="s20"><use href="#bucket"/></svg><span class="chip"><svg viewBox="0 0 22 22"><path d="M1 21L21 1" stroke="#d8141c" stroke-width="2"/></svg></span><span>无</span></div>
    <div class="ink"><svg class="s20"><use href="#pen"/></svg><span class="chip dark"></span><span class="cmyk">C:</span><span class="cmyk">0M:</span><span class="cmyk">0Y:</span><span class="cmyk">0K:</span><span class="cmyk">100</span></div>
    <svg class="monitor" viewBox="0 0 16 18"><path d="M.5.5h15v13H.5z" fill="#e23b3b" stroke="#222"/><path d="M1 7h14v6H1z" fill="#20a8c8"/><circle cx="8" cy="7" r="3" fill="#ddd" stroke="#555"/><path d="M2 17h12" stroke="#222" stroke-width="2"/></svg>
  </footer>

  <div class="ime"><span>CH</span><svg viewBox="0 0 11 14"><path d="M4 1c7 3 7 10-3 12 4-3 5-7 3-12z" fill="none" stroke="#333" stroke-width="1.200"/></svg><span>简</span></div>
  <div class="watermark">
    <svg viewBox="0 0 42 42"><path d="M41 2C22-1 6 8 2 22c-3 9 4 15 9 16C6 27 16 11 41 2z" fill="#4a92d8"/><path d="M12 38c14 4 27-5 27-22-3 9-11 17-27 22z" fill="#6fc08e"/><path d="M33 13c-11-3-20 9-15 16 4 5 12 1 11-5-1-4-7-3-8 1" fill="none" stroke="#5a9edb" stroke-width="4"/></svg>
    <div><p class="wm-name">极光下载站</p><p class="wm-url">www.xz7.com</p></div>
  </div>
</div>
</body>
</html>
```

FILE: styles.css
```css
* { box-sizing: border-box; }
body {
  margin: 0;
  font: 13px/18px "Noto Sans CJK SC", "Noto Sans", sans-serif;
  color: #000;
  background: #f3f3f3;
}
button, input, select { font: inherit; color: inherit; margin: 0; padding: 0; }
input, select { font: 12px/16px "Open Sans", "Noto Sans CJK SC", sans-serif; }
button { border: 0; background: none; }
svg { display: block; }
h1, h2, p, ul { margin: 0; padding: 0; font-size: 13px; font-weight: 400; }
.defs { position: absolute; width: 0; height: 0; }
.app { position: relative; display: flex; flex-direction: column; min-height: 100vh; }
.grow { flex: 1; }

/* title and menu */
.titlebar { display: flex; align-items: center; height: 21px; padding: 0 4px 0 3px; background: #fff; }
.logo { width: 16px; height: 16px; }
.title { margin-left: 5px; white-space: nowrap; font: 12px/18px "Open Sans", "Noto Sans CJK SC", sans-serif; }
.title span { font-size: 13px; line-height: 16px; }
.window-buttons { display: flex; gap: 16px; margin-left: auto; }
.win svg { width: 16px; height: 16px; }
.menubar { display: flex; gap: 21px; align-items: center; height: 22px; padding: 0 11px 2px; background: #d6d6d6; }
.menubar u { text-underline-offset: 2px; }

/* toolbars */
.bar { display: flex; align-items: center; gap: 5px; border-bottom: 1px solid #d4d4d4; }
.standard { height: 32px; padding-left: 4px; }
.property { height: 43px; padding-left: 6px; }
.ib { flex: none; display: grid; place-items: center; width: 24px; height: 24px; }
.ib svg { width: 24px; height: 24px; }
.ib.on { background: #b5b5b5; }
.ib.box { background: #fff; box-shadow: inset 0 0 0 1px #a8a8a8; }
.dim { opacity: .3; }
.drop { width: 11px; height: 24px; }
.drop svg { width: 8px; height: 5px; }
.sep { flex: none; width: 1px; height: 24px; margin: 0 1px; background: #d4d4d4; }
.property .sep { height: 38px; }
.pdf { align-content: center; font-size: 9px; line-height: 9px; font-family: "Noto Sans", sans-serif; }
.ib.pdf svg { height: 12px; }
.mirror { width: 27px; }
.more { display: grid; place-items: center; width: 34px; height: 34px; }
.more svg { width: 12px; height: 12px; }

.pair { display: grid; align-items: center; }
.pair input { height: 17px; min-width: 0; border: 1px solid #b0b0b0; background: #fff; padding: 0 3px; }
.pair input:nth-of-type(2) { border-top-color: #ccc; }
.pair label { line-height: 17px; }
.pos { grid-template-columns: 26px 88px; }
.pos label { padding-left: 4px; }
.size { grid-template-columns: 17px 88px; }
.size svg { width: 13px; height: 13px; margin-left: 2px; }
.pct { grid-template-columns: 43px 14px; }
.pct label { padding-left: 3px; font-size: 12px; }
.lock { width: 18px; height: 18px; border: 1px solid #b0b0b0; background: #fff; }
.lock svg { width: 16px; height: 16px; }
.field { display: flex; align-items: center; }
.field label svg { width: 22px; height: 24px; }
.num { width: 50px; height: 24px; border: 1px solid #a8a8a8; padding: 0 3px; }
.degree svg { width: 17px; height: 24px; }
.penlabel svg { width: 17px; height: 24px; }
.combo { position: relative; display: flex; align-items: center; height: 24px; border: 1px solid #a8a8a8; background: #fff; }
.combo select { flex: 1; min-width: 0; height: 22px; border: 0; background: none; appearance: none; padding-left: 3px; }
.combo input { min-width: 0; border: 0; padding: 0; }
.arrow { display: grid; place-items: center; width: 18px; height: 22px; margin-left: auto; border-left: 1px solid #b8b8b8; background: #ececec; pointer-events: none; }
.arrow svg { width: 8px; height: 5px; }
.arrow .slider { width: 11px; height: 16px; }
.zoom { width: 86px; }
.outline { width: 80px; }
.combo .picked { width: 35px; height: 16px; margin-left: 3px; background: #0078d7; color: #fff; }
.linestyle { width: 100px; }
.ends { width: 50px; }
.smooth { width: 52px; }
.smooth input { width: 29px; padding-left: 3px; }
.stroke { position: absolute; top: 11px; height: 1px; background: #000; }
.stroke.full { left: 0; right: 18px; }
.stroke.right { left: 19px; width: 12px; }
.stroke.left { left: 0; width: 12px; }

/* workspace */
.work { flex: 1; display: flex; min-height: 0; }
.toolbox { flex: none; display: flex; flex-direction: column; align-items: center; gap: 5px; width: 32px; padding-top: 4px; border-right: 1px solid #d4d4d4; }
.toolbox .sep { width: 22px; height: 1px; margin: 1px 0; }
.glyph { grid-template: 24px / 24px; font-size: 17px; font-weight: 700; line-height: 24px; color: #222; }
.glyph span, .glyph svg { grid-area: 1 / 1; }
.document { flex: 1; min-width: 0; display: flex; flex-direction: column; }
.tabs { display: flex; height: 21px; border-bottom: 1px solid #2f92d0; background: #e8e8e8; }
.tabs button { background: #d6d6d6; }
.home { width: 18px; }
.home svg { width: 17px; height: 16px; }
.tab { width: 93px; padding: 0 0 1px 10px; text-align: left; line-height: 18px; }
.home + .tab { width: 98px; padding-left: 16px; }
.tabs .active { width: 96px; background: #cce0ff; }
.tabadd { display: grid; place-items: center; width: 21px; }
.tabadd svg { width: 12px; height: 12px; }

.stage { flex: 1; display: grid; grid-template: 18px minmax(0, 1fr) 17px / 18px minmax(0, 1fr) 16px; background: #fff; }
.origin, .hruler, .vruler { background: #f3f3f3; }
.hruler, .vruler { overflow: visible; }
.origin { width: 100%; height: 100%; }
.hruler { grid-column: 2 / 4; width: 100%; height: 18px; border-bottom: 1px solid #c8c8c8; }
.vruler { grid-row: 2 / 4; width: 18px; height: 100%; border-right: 1px solid #c8c8c8; }
.rlabel { font: 10px/10px "Open Sans", "Noto Sans CJK SC", sans-serif; fill: #888; text-anchor: middle; }
.canvas { width: 100%; height: 100%; }
.pointer { filter: drop-shadow(2px 3px 2px #888); }
.vscroll { display: flex; flex-direction: column; padding-right: 1px; }
.vscroll button { display: grid; place-items: center; height: 17px; background: #f0f0f0; }
.vscroll svg, .hscroll svg { width: 10px; height: 10px; }
.track { flex: 1; display: grid; grid-template-rows: 172fr 430fr 171fr; }
.vscroll .thumb { grid-row: 2; }
.thumb { background: #cbcbcb; }
.pagebar { grid-column: 2 / 4; display: flex; background: #f3f3f3; }
.pagenav { flex: 750 1 0; display: flex; align-items: center; border-top: 1px solid #808080; }
.pagenav button { width: 16px; height: 16px; margin-right: 1px; }
.pagenav svg { width: 16px; height: 12px; }
.count { width: 39px; text-align: center; color: #aaa; white-space: nowrap; line-height: 16px; }
.pagenav .page-tab { display: grid; place-items: center; width: 48px; height: 17px; margin: -1px 0 0 7px; }
.page-tab svg { grid-area: 1 / 1; width: 48px; height: 17px; }
.page-tab span { grid-area: 1 / 1; line-height: 16px; }
.vgrip { width: 7px; height: 100%; }
.pagebar .vgrip { border-top: 1px solid #808080; border-right: 1px solid #808080; }
.hscroll { flex: 754 1 0; display: flex; background: #fff; }
.hscroll button { display: grid; place-items: center; width: 17px; background: #f3f3f3; }
.hscroll .thumb { flex: 1; margin: 1px 0; }
.hscroll .big { width: 14px; height: 14px; }
.docpalette { display: flex; align-items: center; height: 21px; padding: 1px 6px 1px 1px; border-top: 1px solid #d0d0d0; }
.row { display: flex; }
.tiny { flex: none; display: grid; place-items: center; width: 18px; height: 18px; }
.tiny svg { width: 16px; height: 16px; }
.eye { width: 18px; height: 18px; margin: 0 1px; }
.eye svg { width: 18px; height: 18px; }
.sw { flex: none; display: block; width: 18px; height: 18px; border: 1px solid #555; }
.row .sw + .sw { margin-left: -1px; }
.none { background: #fff; }

.docker { flex: none; display: flex; flex-direction: column; width: 317px; border-left: 5px solid #fff; box-shadow: inset 1px 0 #d4d4d4; }
.docker header { display: flex; align-items: center; height: 23px; padding: 0 3px 2px 6px; border-bottom: 1px solid #a8a8a8; background: #e8e8e8; }
.docker h2 { margin-right: auto; }
.docker-body { flex: 1; display: flex; }
.panel { flex: 1; border-right: 1px solid #b0b0b0; padding-left: 1px; }
.tree { height: 203px; padding-top: 1px; background: #fff; list-style: none; }
.tree li { display: flex; align-items: center; height: 18px; padding: 0 2px 0 10px; }
.tree b { font-size: 14px; line-height: 18px; }
.tree button { margin-left: auto; }
.tree button svg { width: 14px; height: 14px; }
.twist { width: 9px; }
.twist svg { width: 7px; height: 12px; }
.folder { width: 18px; height: 16px; }
.handle { width: 11px; height: 3px; margin: 3px auto; }
.actions { display: flex; align-items: center; gap: 3px; padding: 0 2px 9px 4px; border-bottom: 1px solid #d4d4d4; }
.push { width: 97px; height: 24px; border: 1px solid #a8a8a8; background: #e8e8e8; }
.actions .ib { margin-right: auto; }
.apply { width: 123px; border-color: #ccc; background: #f3f3f3; color: #c0c0c0; }
.side-tabs { width: 21px; background: #e8e8e8; }
.side-tab { display: flex; flex-direction: column; align-items: center; gap: 5px; width: 21px; height: 99px; padding-top: 4px; background: #b0b0b0; }
.side-tab svg { width: 16px; height: 16px; }
.side-tab span { writing-mode: vertical-rl; text-orientation: sideways; line-height: 20px; }
.side-tabs .more { width: 21px; height: 24px; }

.palette { flex: none; display: flex; flex-direction: column; align-items: center; width: 21px; padding-top: 1px; border-left: 1px solid #d4d4d4; }
.hgrip { width: 18px; height: 6px; }
.palette .eye { margin: 1px 0 0; }
.swatches { flex: 1 1 0; min-height: 0; overflow: hidden; margin: 2px 0 0; }
.palette .swatches ~ .tiny { margin-bottom: 1px; }
.swatches .sw { margin-bottom: -1px; }
.swatches .last { margin-bottom: 0; }

/* status bar */
.status { display: flex; align-items: center; height: 36px; padding: 0 11px 0 7px; border-top: 1px solid #d0d0d0; white-space: nowrap; }
.hint { margin-left: 5px; }
.object { margin-left: 22px; }
.fill, .ink { display: flex; align-items: center; }
.fill { width: 202px; margin-left: auto; }
.ink { width: 261px; }
.s20 { width: 20px; height: 24px; }
.chip { width: 22px; height: 22px; margin-right: 3px; border: 1px solid #999; background: #fff; }
.chip svg { width: 20px; height: 20px; }
.dark { background: #231815; border-color: #231815; }
.cmyk { width: 32px; text-align: right; font-family: "Liberation Mono", monospace; font-size: 12px; }
.chip + .cmyk { width: 16px; text-align: left; }
.monitor { width: 16px; height: 18px; }

.ime { position: absolute; right: 604px; bottom: 57px; display: flex; align-items: center; gap: 4px; padding: 0 5px; border: 1px solid #999; border-radius: 5px; background: #fff; box-shadow: 1px 2px 3px #777; line-height: 25px; }
.ime svg { width: 11px; height: 14px; }
.watermark { position: absolute; right: 9px; bottom: 4px; display: flex; align-items: center; opacity: .85; }
.watermark svg { width: 42px; height: 42px; }
.wm-name { font-size: 21px; line-height: 24px; font-weight: 700; color: #7ba7d8; text-shadow: 0 0 2px #fff; }
.wm-url { font: 18px/20px "Liberation Sans", sans-serif; color: #7cc592; }
```
